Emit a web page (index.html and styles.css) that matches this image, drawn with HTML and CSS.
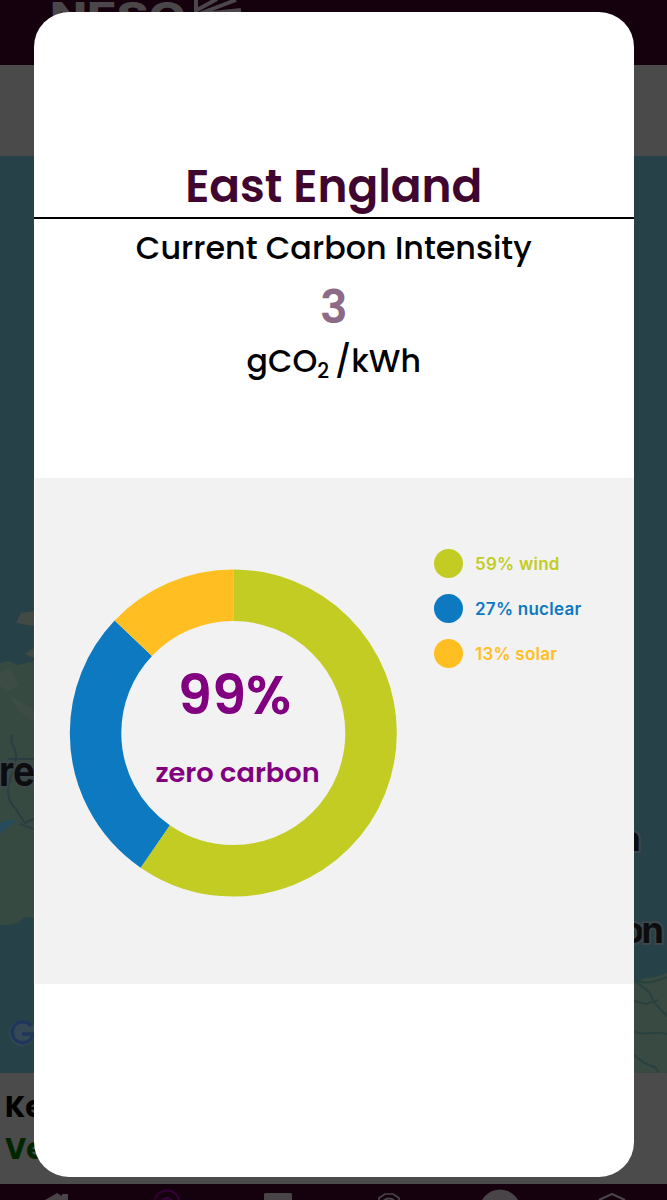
FILE: index.html
```html
<!DOCTYPE html>
<html lang="en">
<head>
<meta charset="utf-8">
<title>Carbon Intensity</title>
<link rel="stylesheet" href="styles.css">
</head>
<body>
<div class="screen">
  <div class="app">
    <header class="top">
      <svg width="667" height="65" viewBox="0 0 667 65">
        <text class="brand" x="50" y="30" textLength="136" lengthAdjust="spacingAndGlyphs">NESO</text>
        <path d="M196 0V30M197 10L217 -1M199 14L236 0M203 14L241 10" stroke="#4b464a" stroke-width="4" fill="none"/>
      </svg>
    </header>
    <div class="band"></div>
    <svg class="map" width="667" height="917" viewBox="0 156 667 917">
      <rect y="156" width="667" height="917" fill="#264148"/>
      <path d="M16 623L21 613L34 611V626ZM25 654L34 648V658Z" fill="#424a43"/>
      <path d="M0 663L8 661L18 665L34 661V918L24 917L18 923L8 925L0 925Z" fill="#374a42"/>
      <path d="M0 672L10 668L19 684L9 691L0 686ZM8 694L22 703L34 710V722L18 710Z" fill="#3d4d45"/>
      <path d="M0 823L9 820H17L0 834Z" fill="#264b5a"/>
      <path d="M12 735C9 746 17 746 16 758L12 774C6 788 7 801 15 808L25 823L34 819M8 759H34M20 824L34 829" fill="none" stroke="#2b3d40" stroke-width="2"/>
      <path d="M634 983L645 978L655 977L667 973V1073H634Z" fill="#394a42"/>
      <path d="M634 978C642 986 655 982 667 977M636 982L649 992L656 1005L667 1016M634 1001L646 1004L658 1000M634 1031C643 1037 653 1030 667 1034M634 1055L646 1064L655 1067L659 1073" fill="none" stroke="#29413f" stroke-width="2"/>
      <text class="place" x="-1" y="786" font-size="41" textLength="36" lengthAdjust="spacingAndGlyphs">re</text>
      <text class="place" x="619" y="851" font-size="35">n</text>
      <text class="place" x="622" y="943" font-size="36" textLength="42">on</text>
      <circle cx="22" cy="1033" r="13" fill="#344953"/>
      <path d="M31 1026A10.500 10.500 0 1 0 33 1034H22" fill="none" stroke="#20365c" stroke-width="3.500"/>
    </svg>
    <section class="key">
      <p class="key-title">Key</p>
      <p class="key-low">Very low</p>
    </section>
    <nav class="tabs">
      <svg width="667" height="16" viewBox="0 1184 667 16">
        <path d="M45 1200L57 1193L62 1196V1194H68V1200Z" fill="#484448"/>
        <circle cx="167" cy="1203" r="12.500" fill="none" stroke="#350039" stroke-width="2"/>
        <circle cx="167" cy="1203" r="5" fill="none" stroke="#350039" stroke-width="2.500"/>
        <rect x="264" y="1193" width="28" height="12" rx="1.500" fill="#484448"/>
        <path d="M379 1200V1198L385 1194H393L399 1198V1200M383 1201Q389 1196 395 1201" fill="none" stroke="#484448" stroke-width="1.700"/>
        <circle cx="500" cy="1210" r="20.500" fill="#484448"/>
        <path d="M599 1200L612 1194L625 1200" fill="none" stroke="#484448" stroke-width="2.200"/>
      </svg>
    </nav>
  </div>

  <main class="modal">
    <h1 class="region">East England</h1>
    <p class="caption">Current Carbon Intensity</p>
    <p class="value">3</p>
    <p class="unit">gCO<sub>2</sub><i>/</i>kWh</p>
    <section class="mix">
      <div class="donut">
        <svg width="328" height="328" viewBox="-164.300 -164 328 328">
          <g fill="none" stroke-width="51.500" transform="rotate(-90)">
            <circle r="137.750" pathLength="99" stroke="#c2cc23" stroke-dasharray="59 40"/>
            <circle r="137.750" pathLength="99" stroke="#0d79c1" stroke-dasharray="27.200 71.800" stroke-dashoffset="-59"/>
            <circle r="137.750" pathLength="99" stroke="#ffbe22" stroke-dasharray="12.800 86.200" stroke-dashoffset="-86.200"/>
          </g>
        </svg>
        <div class="total">
          <span class="percent">99%</span>
          <span class="zero">zero carbon</span>
        </div>
      </div>
      <ul class="legend">
        <li class="wind">59% wind</li>
        <li class="nuclear">27% nuclear</li>
        <li class="solar">13% solar</li>
      </ul>
    </section>
  </main>
</div>
</body>
</html>
```
FILE: styles.css
```css
* { box-sizing: border-box; }
body, h1, p, ul { margin: 0; padding: 0; }
body { font-family: Poppins, Inter, "Open Sans", sans-serif; }
.screen { position: relative; width: 667px; height: 1200px; overflow: hidden; }
.app { display: flex; flex-direction: column; height: 1200px; background: #4b4b4b; }
svg { display: block; }
.top { height: 64.5px; background: #15000d; overflow: hidden; }
.brand { font: 800 38px Inter, sans-serif; fill: #4b464a; }
.band { height: 91.5px; background: #4a4a4a; }
.place { font-family: Inter, sans-serif; font-weight: 700; fill: #0b0d0e; stroke: #3c474a; stroke-width: 4px; paint-order: stroke; }
.key { height: 111px; padding: 13px 0 0 5px; font-weight: 700; font-size: 29px; line-height: 42px; white-space: nowrap; }
.key-title { color: #000; }
.key-low { color: #002600; }
.tabs { height: 16px; background: #15000d; }

.modal {
  position: absolute; left: 33.5px; top: 11.5px;
  width: 600.5px; height: 1165px;
  padding-top: 149.5px;
  border-radius: 35px; background: #fff;
  display: flex; flex-direction: column;
  overflow: hidden; text-align: center; white-space: nowrap;
}
.region { height: 58px; border-bottom: 2px solid #000; font-size: 45.4px; font-weight: 600; line-height: 50px; color: #3f0730; }
.caption { margin-top: 7px; font-size: 31.8px; font-weight: 500; line-height: 44px; }
.value { margin-top: 7px; font-size: 46px; font-weight: 600; line-height: 60px; color: #8c6b86; }
.unit { height: 50px; margin-top: -1px; font-size: 31.6px; font-weight: 500; line-height: 50px; }
.unit sub { font-size: 20.5px; line-height: 0; vertical-align: -6px; }
.unit i { font-style: normal; margin: 0 0 0 6px; }
.mix { display: flex; margin: 92px 0 0 1px; height: 505.5px; padding: 71px 0 0 34px; background: #f2f2f2; }
.donut { display: grid; width: 328px; height: 328px; margin-top: 20px; }
.donut > * { grid-area: 1 / 1; }
.total { display: flex; flex-direction: column; align-items: center; color: #800080; font-weight: 600; padding-top: 91px; }
.percent { font-size: 54.5px; line-height: 70px; padding-left: 4px; }
.zero { margin-top: 23px; font-size: 27.2px; line-height: 40px; padding-left: 10px; }
.legend { list-style: none; display: flex; flex-direction: column; gap: 16px; margin-left: 37.5px; text-align: left; }
.legend li { display: flex; align-items: center; gap: 12px; height: 29px; font: 600 17px Inter, sans-serif; letter-spacing: .25px; }
.legend li::before { content: ""; width: 29px; height: 29px; border-radius: 50%; background: currentColor; }
.wind { color: #c2cc23; }
.nuclear { color: #0d79c1; }
.solar { color: #ffbe22; }
```
